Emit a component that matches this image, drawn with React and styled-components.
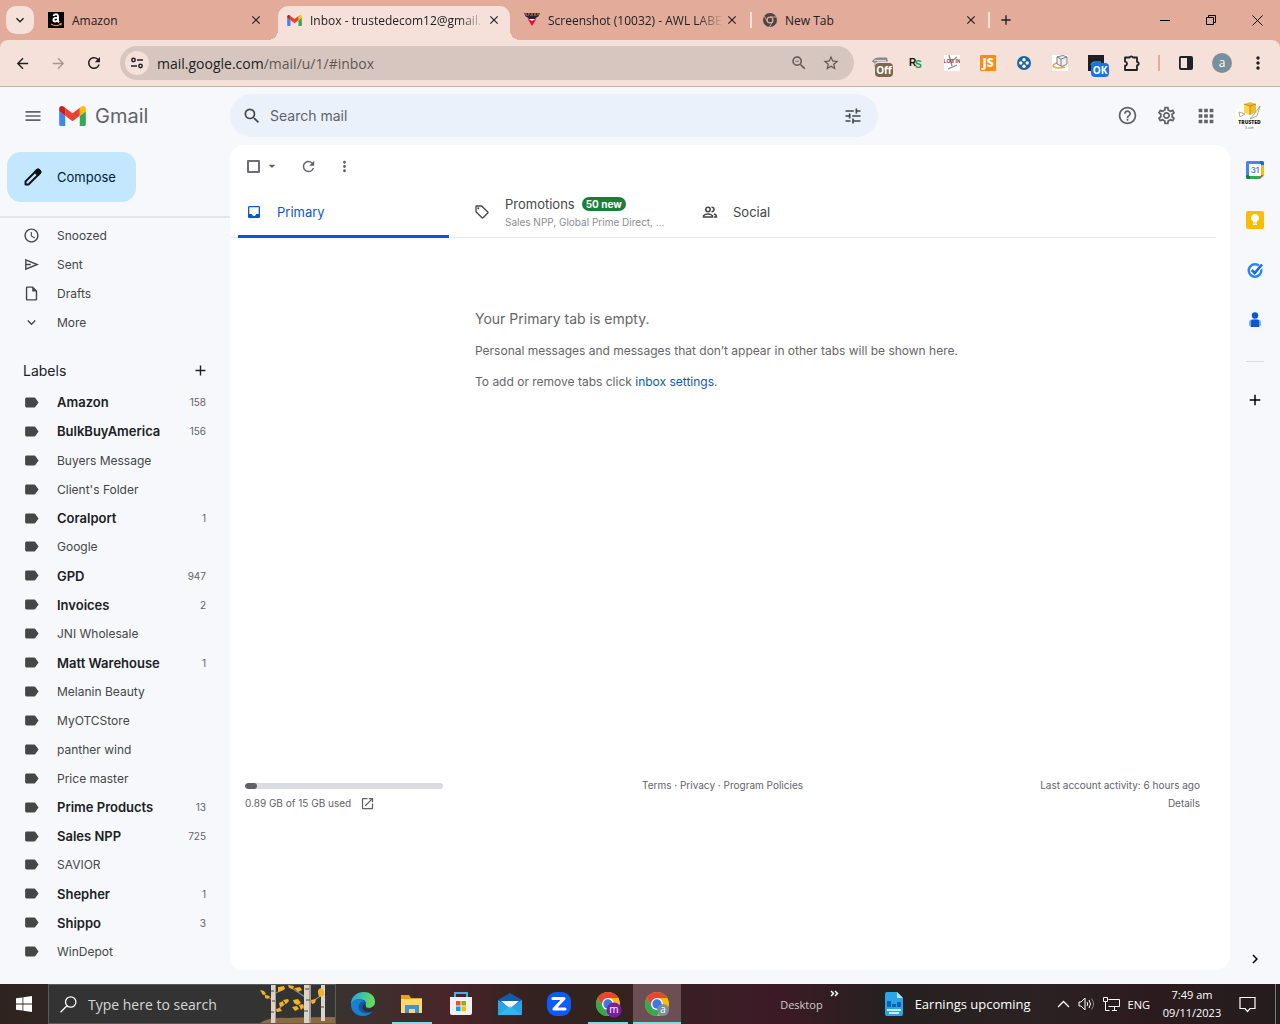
import React from "react";
import styled, { createGlobalStyle } from "styled-components";
import {
  MdAccessTime,
  MdAdd,
  MdApps,
  MdArrowBack,
  MdArrowDropDown,
  MdArrowForward,
  MdChevronRight,
  MdClose,
  MdExpandMore,
  MdHelpOutline,
  MdInbox,
  MdLabel,
  MdMenu,
  MdMoreVert,
  MdOpenInNew,
  MdOutlineInsertDriveFile,
  MdOutlineSell,
  MdOutlineSettings,
  MdRefresh,
  MdSearch,
  MdStarOutline,
  MdTune,
  MdZoomOut,
} from "react-icons/md";

const GlobalStyle = createGlobalStyle`
  * { box-sizing: border-box; }
  body { margin: 0; font-family: Inter, "Liberation Sans", sans-serif; }
  button { border: 0; padding: 0; background: none; color: inherit; font: inherit; cursor: pointer; }
  a { color: inherit; text-decoration: none; }
  svg { display: block; flex: none; }
  ul { list-style: none; margin: 0; padding: 0; }
`;

const Screen = styled.div`
  display: flex;
  flex-direction: column;
  min-height: 100vh;
  background: #f6f8fc;
`;

/* browser */

const TabStrip = styled.div`
  display: flex;
  height: 40px;
  padding-left: 6px;
  background: #e3ab9a;
  font-family: "Open Sans", "Noto Sans", sans-serif;
  font-size: 12px;
  color: #202124;
`;

const TabSearch = styled.button`
  display: grid;
  place-items: center;
  width: 28px;
  height: 28px;
  margin: 6px 4px 0 0;
  border-radius: 10px;
  background: #f5e0da;
`;

const Tab = styled.div`
  position: relative;
  display: flex;
  align-items: center;
  gap: 2px;
  width: ${(p) => p.$width}px;
  margin-top: ${(p) => (p.$active ? 6 : 0)}px;
  padding: ${(p) => (p.$active ? "0 9px 6px 9px" : "0 10px")};
  border-radius: 10px 10px 0 0;
  background: ${(p) => (p.$active ? "#f5e0da" : "transparent")};
  &::before,
  &::after {
    content: "";
    display: ${(p) => (p.$active ? "block" : "none")};
    position: absolute;
    bottom: 0;
    width: 10px;
    height: 10px;
  }
  &::before {
    left: -10px;
    background: radial-gradient(circle at 0 0, transparent 10px, #f5e0da 10px);
  }
  &::after {
    right: -10px;
    background: radial-gradient(circle at 100% 0, transparent 10px, #f5e0da 10px);
  }
`;

const TabTitle = styled.span`
  flex: 1;
  margin-left: 6px;
  overflow: hidden;
  white-space: nowrap;
  mask-image: ${(p) => (p.$fade ? "linear-gradient(90deg, #000 85%, transparent)" : "none")};
`;

const TabRule = styled.span`
  width: 2px;
  height: 16px;
  margin-top: 12px;
  background: #f5e0da;
`;

const NewTab = styled.button`
  display: grid;
  place-items: center;
  width: 32px;
`;

const WindowButtons = styled.div`
  display: flex;
  margin-left: auto;
`;

const WindowButton = styled.button`
  display: grid;
  place-items: center;
  width: 46px;
`;

const ToolbarWrap = styled.div`
  background: #e3ab9a;
`;

const Toolbar = styled.div`
  display: flex;
  align-items: center;
  height: 47px;
  padding: 0 4px;
  border-bottom: 1px solid #c4b1ab;
  border-radius: 8px 8px 0 0;
  background: #f5e0da;
`;

const ToolButton = styled.button`
  display: grid;
  place-items: center;
  width: 36px;
  height: 34px;
  color: ${(p) => (p.$dim ? "#a89692" : "#202124")};
`;

const Address = styled.div`
  display: flex;
  align-items: center;
  flex: 1;
  height: 34px;
  margin: 0 8px;
  padding: 0 14px 0 5px;
  gap: 8px;
  border-radius: 17px;
  background: #d7c6bf;
  color: #5f5653;
`;

const SiteInfo = styled.button`
  display: grid;
  place-items: center;
  width: 24px;
  height: 24px;
  border-radius: 12px;
  background: #f5e0da;
`;

const AddressText = styled.span`
  flex: 1;
  font: 14px "Open Sans", "Noto Sans", sans-serif;
  b {
    font-weight: 400;
    color: #202124;
  }
`;

const AddressIcons = styled.span`
  display: flex;
  gap: 14px;
`;

const Extension = styled.button`
  position: relative;
  display: grid;
  place-items: center;
  width: 36px;
  height: 34px;
`;

const ExtensionBadge = styled.span`
  position: absolute;
  left: 13px;
  top: 17px;
  width: 18px;
  height: 14px;
  border-radius: 4px;
  background: ${(p) => p.$color};
  color: #fff;
  font: 700 10px/14px "Open Sans", sans-serif;
  text-align: center;
`;

const ToolbarRule = styled.span`
  width: 2px;
  height: 16px;
  margin: 0 8px;
  background: #e3ab9a;
`;

const ProfileDot = styled.span`
  display: grid;
  place-items: center;
  width: 20px;
  height: 20px;
  border-radius: 10px;
  background: #78909c;
  color: #fff;
  font: 12px/18px "Open Sans", sans-serif;
`;

/* mail header */

const Header = styled.header`
  display: flex;
  align-items: center;
  height: 58px;
  padding: 0 16px 1px 0;
`;

const Brand = styled.div`
  display: flex;
  align-items: center;
  width: 230px;
  padding-left: 23px;
  color: #5f6368;
`;

const BrandLink = styled.a`
  display: flex;
  align-items: center;
  gap: 9px;
  margin-left: 16px;
  font-size: 20px;
`;

const SearchBar = styled.form`
  display: flex;
  align-items: center;
  flex: 0 1 648px;
  height: 43px;
  gap: 8px;
  padding: 0 15px 0 12px;
  border-radius: 22px;
  background: #eaf1fb;
  color: #444746;
`;

const SearchInput = styled.input`
  flex: 1;
  min-width: 0;
  padding: 0;
  border: 0;
  outline: 0;
  background: none;
  font: 14px Inter, sans-serif;
  &::placeholder {
    color: #5f6368;
    opacity: 1;
  }
`;

const HeaderActions = styled.div`
  display: flex;
  align-items: center;
  gap: 18px;
  margin-left: auto;
  color: #5f6368;
`;

/* mail body */

const Body = styled.div`
  display: flex;
  flex: 1;
`;

const Sidebar = styled.nav`
  display: flex;
  flex-direction: column;
  width: 230px;
  padding: 7px 0 18px;
  color: #444746;
`;

const Compose = styled.button`
  display: flex;
  align-items: center;
  align-self: flex-start;
  gap: 14px;
  height: 50px;
  margin: 0 0 14px 7px;
  padding: 0 20px 0 16px;
  border-radius: 14px;
  background: #c2e7ff;
  color: #001d35;
  font-size: 13px;
`;

const FolderList = styled.ul`
  padding-top: 3px;
  border-top: 2px solid #e3e5ea;
`;

const LabelList = styled.ul`
  display: flex;
  flex: 1;
  flex-direction: column;
  li {
    display: flex;
    flex: 1;
  }
`;

const SideLink = styled.a`
  display: flex;
  align-items: center;
  width: 100%;
  min-height: ${(p) => (p.$label ? 24 : 29)}px;
  padding: 0 24px 0 23px;
  gap: 17px;
  font-size: ${(p) => (p.$bold ? 13 : 12)}px;
  font-weight: ${(p) => (p.$bold ? 600 : 400)};
  color: ${(p) => (p.$bold ? "#202124" : "#444746")};
  svg {
    color: #444746;
  }
`;

const Count = styled.span`
  margin-left: auto;
  font-size: 10px;
  font-weight: 400;
  color: #5f6368;
`;

const LabelsHeader = styled.div`
  display: flex;
  align-items: center;
  justify-content: space-between;
  height: 36px;
  margin-top: 15px;
  padding: 0 21px 0 23px;
  font-size: 14px;
  color: #202124;
`;

const Main = styled.main`
  display: flex;
  flex: 1;
  flex-direction: column;
  min-width: 0;
  margin-bottom: 14px;
  border-radius: 14px;
  background: #fff;
`;

const MailTools = styled.div`
  display: flex;
  align-items: center;
  height: 42px;
  padding-left: 17px;
  color: #5f6368;
`;

const SelectAll = styled.input`
  appearance: none;
  width: 13px;
  height: 13px;
  margin: 0 4px 0 0;
  border: 2px solid #6b6e72;
  border-radius: 1px;
`;

const Gap = styled.span`
  width: ${(p) => p.$width}px;
`;

const Tabs = styled.div`
  display: flex;
  gap: 17px;
  height: 51px;
  margin-right: 14px;
  padding-left: 8px;
  border-bottom: 1px solid #e8eaed;
`;

const MailTab = styled.button`
  display: flex;
  align-items: center;
  gap: 15px;
  width: 211px;
  margin-bottom: -1px;
  padding: 2px 8px 0;
  border-bottom: 3px solid ${(p) => (p.$active ? "#0b57d0" : "transparent")};
  border-radius: 3px 3px 0 0;
  color: ${(p) => (p.$active ? "#0b57d0" : "#444746")};
  font-size: 13px;
  text-align: left;
  white-space: nowrap;
`;

const TabText = styled.span`
  display: flex;
  flex-direction: column;
  gap: 4px;
`;

const TabLine = styled.span`
  display: flex;
  align-items: center;
  gap: 7px;
`;

const NewBadge = styled.span`
  padding: 0 4px;
  border-radius: 7px;
  background: #188038;
  color: #fff;
  font-size: 10px;
  font-weight: 700;
  line-height: 14px;
`;

const TabSenders = styled.span`
  font-size: 10px;
  color: #8a8d91;
`;

const Empty = styled.section`
  flex: 1;
  padding: 70px 0 0 245px;
  color: #666;
  font-size: 12px;
  line-height: 20px;
  h1 {
    margin: 0 0 11px;
    font-size: 14px;
    font-weight: 400;
    line-height: 22px;
  }
  p {
    margin: 0 0 11px;
  }
  a {
    color: #0b57d0;
  }
`;

const Footer = styled.footer`
  display: grid;
  grid-template-columns: 1fr 1fr 1fr;
  padding: 0 30px 158px 15px;
  color: #5f6368;
  font-size: 10px;
  line-height: 18px;
`;

const Storage = styled.div`
  width: 198px;
`;

const StorageBar = styled.div`
  height: 6px;
  margin: 7px 0 5px;
  border-radius: 3px;
  background: #dadce0;
  overflow: hidden;
`;

const StorageUsed = styled.div`
  height: 6px;
  border-radius: 3px;
  background: #5f6368;
`;

const StorageText = styled.a`
  display: flex;
  align-items: center;
  gap: 9px;
`;

const FooterLinks = styled.div`
  text-align: center;
`;

const Activity = styled.div`
  text-align: right;
`;

const Rail = styled.aside`
  display: flex;
  flex-direction: column;
  align-items: center;
  gap: 32px;
  width: 50px;
  padding: 16px 0;
`;

const RailRule = styled.hr`
  width: 18px;
  margin: 0 0 -3px;
  border: 0;
  border-top: 1px solid #dadce0;
`;

const RailBottom = styled.button`
  margin-top: auto;
`;

/* windows taskbar */

const Taskbar = styled.div`
  display: flex;
  align-items: stretch;
  height: 40px;
  background: linear-gradient(90deg, #2f231f 0, #3a322e 28%, #4a242a 35%, #33221f 42%, #33231f 47%, #3c1c27 58%, #3c1a25 61%, #272020 69%, #2a2222 80%, #2c1b1e 90%, #241d1d 100%);
  color: #fff;
  font: 11px "Open Sans", "Noto Sans", sans-serif;
`;

const StartButton = styled.button`
  display: grid;
  place-items: center;
  width: 48px;
`;

const TaskSearch = styled.label`
  display: flex;
  align-items: center;
  width: 288px;
  padding-left: 11px;
  gap: 11px;
  border: 1px solid #5a5a5a;
  background: #333;
`;

const TaskSearchInput = styled.input`
  flex: 1;
  min-width: 0;
  padding: 0;
  border: 0;
  outline: 0;
  background: none;
  font: 14px "Open Sans", "Noto Sans", sans-serif;
  &::placeholder {
    color: #d6d6d6;
    opacity: 1;
  }
`;

const TaskApps = styled.div`
  display: flex;
  gap: 1px;
  padding-left: 3px;
`;

const TaskApp = styled.button`
  display: grid;
  place-items: center;
  width: 48px;
  background: ${(p) =>
    p.$active
      ? "linear-gradient(#76dfe6, #76dfe6) bottom / 48px 2px no-repeat, #6b4f55"
      : p.$running
      ? "linear-gradient(#76dfe6, #76dfe6) bottom / 40px 2px no-repeat"
      : "none"};
`;

const Tray = styled.div`
  display: flex;
  align-items: center;
  margin-left: auto;
`;

const DesktopLabel = styled.span`
  color: #ccc;
`;

const Overflow = styled.button`
  align-self: flex-start;
  margin: 0 46px 0 7px;
  padding-top: 6px;
`;

const News = styled.button`
  display: flex;
  align-items: center;
  gap: 12px;
  margin-right: 26px;
  font-size: 13px;
`;

const TrayIcons = styled.div`
  display: flex;
  align-items: center;
  gap: 8px;
`;

const Clock = styled.div`
  width: 60px;
  margin: 0 17px 0 12px;
  text-align: center;
  line-height: 18px;
  white-space: nowrap;
`;

const ShowDesktop = styled.button`
  width: 5px;
  height: 40px;
  margin-left: 19px;
  border-left: 1px solid #777;
`;

/* drawings */

const GmailMark = ({ width = 27, height = 20 }) => (
  <svg width={width} height={height} viewBox="0 0 88 66">
    <path fill="#4285f4" d="M6 66h14V32L0 17v43c0 3.300 2.700 6 6 6" />
    <path fill="#34a853" d="M68 66h14c3.300 0 6-2.700 6-6V17L68 32" />
    <path fill="#fbbc04" d="M68 6v26l20-15V9c0-7.400-8.500-11.600-14.400-7.200" />
    <path fill="#ea4335" d="M20 32V6l24 18L68 6v26L44 50" />
    <path fill="#c5221f" d="M0 9v8l20 15V6l-5.600-4.200C8.500-2.600 0 1.600 0 9" />
  </svg>
);

const AmazonMark = () => (
  <svg width="16" height="16" viewBox="0 0 16 16">
    <rect width="16" height="16" fill="#000" />
    <path d="M5.500 4C6 1.800 10 1.700 10 4v5l1 1.300M10 5.600C7 5.500 5.400 6.300 5.400 8s3.600 2.300 4.600-.4" fill="none" stroke="#fff" strokeWidth="1.900" />
    <path d="M3 12q5 3.200 10 0M11.500 11.700l1.700-.1-.4 1.700" fill="none" stroke="#f90" strokeWidth="1.100" />
  </svg>
);

const AwlMark = () => (
  <svg width="16" height="16" viewBox="0 0 16 16">
    <path d="M0 1h16l-2 4H2z" fill="#30202c" />
    <path d="M1 2h14" stroke="#d49a3c" strokeDasharray="2 1" />
    <path d="M2 3.500h12" stroke="#c02090" strokeDasharray="3 1" />
    <path d="M3 5h10l-2 2H5z" fill="#1c2060" />
    <path d="M5 7h6l-3 2z" fill="#fff" />
    <path d="M3.500 6.500 8 9l4.500-2.500L8 14z" fill="#f00c1c" />
  </svg>
);

const GreyChrome = () => (
  <svg width="14" height="14" viewBox="0 0 24 24">
    <circle cx="12" cy="12" r="12" fill="#4a4546" />
    <circle cx="12" cy="12" r="5" fill="#4a4546" stroke="#e3ab9a" strokeWidth="2.200" />
    <path d="M12 6.800h11M7.600 14.600 2.200 5.400M16.400 14.600 11 24" stroke="#e3ab9a" strokeWidth="1.500" />
  </svg>
);

const ChromeMark = ({ badge, letter }) => (
  <svg width="28" height="28" viewBox="0 0 28 28">
    <circle cx="14" cy="14" r="12" fill="#fbbc04" />
    <path d="M14 8h10.400a12 12 0 0 0-20.800 0l5.300 9z" fill="#ea4335" />
    <path d="M19 17l-5 9A12 12 0 0 1 3.600 8l5.200 9z" fill="#34a853" />
    <circle cx="14" cy="14" r="6" fill="#fff" />
    <circle cx="14" cy="14" r="4.700" fill="#3b78e7" />
    <circle cx="20" cy="20" r={letter === "m" ? 7.500 : 6} fill={badge} />
    <text x="20" y="23" fontSize="10" textAnchor="middle" fill="#fff">{letter}</text>
  </svg>
);

const SiteInfoIcon = () => (
  <svg width="14" height="14" viewBox="0 0 14 14" fill="none" stroke="#202124" strokeWidth="1.500">
    <circle cx="3.500" cy="4" r="1.700" />
    <path d="M7 4h6M1 10h6" />
    <circle cx="10.500" cy="10" r="1.700" />
  </svg>
);

const PuzzleIcon = () => (
  <svg width="18" height="18" viewBox="0 0 18 18" fill="none" stroke="#202124" strokeWidth="1.800" strokeLinejoin="round">
    <path d="M2 3.500h4.500a1.800 1.800 0 0 1 3.400 0H14v4.400a1.700 1.700 0 0 1 0 3.400V16H2v-4.300a2 2 0 0 0 0-4z" />
  </svg>
);

const SidePanelIcon = () => (
  <svg width="16" height="16" viewBox="0 0 16 16">
    <rect x="1.900" y="2" width="12.200" height="12" rx="1" fill="none" stroke="#202124" strokeWidth="1.800" />
    <path d="M9 2h5v12H9z" fill="#202124" />
  </svg>
);

const CouponIcon = () => (
  <svg width="20" height="18" viewBox="0 0 20 18">
    <path d="M2 8q1-4 6-4.500h9l1 4H8L5 9z" fill="#85898a" />
    <path d="M4 6.500h12" stroke="#d8dad9" strokeWidth="1.200" />
    <path d="M5 9v4" stroke="#c3c5c4" strokeWidth="2" />
  </svg>
);

const RsIcon = () => (
  <svg width="16" height="16" viewBox="0 0 16 16" fontFamily="Liberation Sans" fontWeight="700">
    <text x="1" y="11" fontSize="10" fill="#111">R</text>
    <text x="7" y="13" fontSize="10" fill="#18a04c">S</text>
  </svg>
);

const LoginIcon = () => (
  <svg width="16" height="16" viewBox="0 0 16 16">
    <rect width="16" height="16" fill="#fff" />
    <path d="m5 0 3 11M4 14l9-4M8 6l5-4" stroke="#888" fill="none" strokeWidth="1.300" />
    <text x="8" y="8" fontSize="5" textAnchor="middle" fontWeight="700" fontFamily="Liberation Sans" fill="#9b2f33">LOG IN</text>
  </svg>
);

const JsIcon = () => (
  <svg width="16" height="16" viewBox="0 0 16 16">
    <rect width="16" height="16" rx="1" fill="#ff8a0d" />
    <text x="8" y="12" fontSize="12" textAnchor="middle" fontWeight="800" fontFamily="Open Sans" fill="#fff">JS</text>
  </svg>
);

const CrossIcon = () => (
  <svg width="14" height="14" viewBox="0 0 14 14">
    <circle cx="7" cy="7" r="7" fill="#1f6698" />
    <g fill="#fff">
      <circle cx="7" cy="3.800" r="1.700" />
      <circle cx="7" cy="10.200" r="1.700" />
      <circle cx="3.800" cy="7" r="1.700" />
      <circle cx="10.200" cy="7" r="1.700" />
    </g>
  </svg>
);

const BoxIcon = () => (
  <svg width="16" height="16" viewBox="0 0 16 16">
    <rect width="16" height="16" fill="#fff" />
    <path d="M5 8c-8 2-3 7 8 4" fill="none" stroke="#f0a44c" strokeWidth="1.500" />
    <path d="m5 2 6-1.500L15 2v7l-5 2.500L5 9z" fill="#eee" stroke="#666" strokeWidth=".8" />
    <path d="m5 2 4 2v7M9 4l6-2" fill="none" stroke="#666" strokeWidth=".8" />
  </svg>
);

const DarkIcon = () => (
  <svg width="16" height="16" viewBox="0 0 16 16">
    <rect width="16" height="16" fill="#221d22" />
    <path d="M3 10q1-3 5-3h5" fill="none" stroke="#2398d0" strokeWidth="1.300" />
  </svg>
);

const Avatar = () => (
  <svg width="29" height="29" viewBox="0 0 29 29">
    <circle cx="14.500" cy="14.500" r="14.500" fill="#fff" />
    <path d="m4 11 6 2-5 3zM20 12l5-7-3 10-7 3z" fill="#fff" stroke="#9b9a76" strokeWidth=".8" />
    <path d="m9 3 6-2 6 2v8l-6 3-6-3z" fill="#f1bd2b" />
    <path d="m9 3 6 2v9l-6-3z" fill="#ffd84e" />
    <path d="m9 3 6 2 6-2M15 5v9" fill="none" stroke="#9c771c" strokeWidth=".7" />
    <text x="14.500" y="23" fontSize="5" textAnchor="middle" fontWeight="800" fontFamily="Open Sans" fill="#111">TRUSTED</text>
    <text x="14.500" y="28" fontSize="3" textAnchor="middle" fontFamily="Open Sans" fill="#444">E-com</text>
  </svg>
);

const PencilIcon = () => (
  <svg width="20" height="20" viewBox="0 0 20 20" fill="none" stroke="#111" strokeWidth="1.900" strokeLinejoin="round">
    <path d="M2.500 17.500v-3L14 3q1-1 2 0l1 1q1 1 0 2L5.500 17.500z" />
    <path d="m12 5 3 3 2.300-2.300q.6-.8-.3-1.700l-1-1q-.9-.9-1.700-.3z" fill="#111" />
  </svg>
);

const SendIcon = ({ size }) => (
  <svg width={size} height={size} viewBox="0 0 24 24" fill="none" stroke="currentColor" strokeWidth="2">
    <path d="M4 5.500 20 12 4 18.500zM4 12h7" />
  </svg>
);

const PeopleIcon = () => (
  <svg width="16" height="16" viewBox="0 0 16 16" fill="none" stroke="currentColor" strokeWidth="1.500">
    <circle cx="6" cy="5.500" r="2.200" />
    <path d="M1.500 13v-1.300Q3 10 6 10t4.500 1.700V13zM9.500 3.300q2.500 0 2.500 2.200t-2.500 2.200M12 10q2.500.7 2.500 3H12" />
  </svg>
);

const CalendarIcon = () => (
  <svg width="18" height="18" viewBox="0 0 18 18">
    <path d="M1.500 0H14v4H4v10H0V1.500Q0 0 1.500 0" fill="#4285f4" />
    <path d="M14 0h2.500Q18 0 18 1.500V4h-4z" fill="#1967d2" />
    <path d="M14 4h4v10h-4z" fill="#fbbc04" />
    <path d="M4 14h10v4H4z" fill="#34a853" />
    <path d="M0 14h4v4H1.500Q0 18 0 16.500" fill="#188038" />
    <path d="M14 14h4l-4 4z" fill="#ea4335" />
    <path d="M3 3h12v12H3z" fill="#fff" />
    <text x="9" y="12" fontSize="8" textAnchor="middle" fontWeight="600" fill="#4285f4">31</text>
  </svg>
);

const KeepIcon = () => (
  <svg width="18" height="18" viewBox="0 0 18 18">
    <rect width="18" height="18" rx="2" fill="#fbbc04" />
    <path d="M7 11.500v-1a4 4 0 1 1 4 0v1zM7 12.500h4V14H7z" fill="#fff" />
  </svg>
);

const TasksIcon = () => (
  <svg width="18" height="18" viewBox="0 0 18 18" fill="none">
    <circle cx="9" cy="9.500" r="6.300" stroke="#2684fc" strokeWidth="2.400" />
    <path d="m5.700 9 3 3L16 4.500" stroke="#f6f8fc" strokeWidth="4" />
    <path d="m5.700 9 3 3L16 3.500" stroke="#1a6fe8" strokeWidth="2.600" />
  </svg>
);

const ContactsIcon = () => (
  <svg width="18" height="18" viewBox="0 0 18 18">
    <circle cx="9" cy="4.500" r="3.200" fill="#0b57d0" />
    <rect x="3" y="8.500" width="12" height="7.500" rx="3" fill="#7baaf7" />
    <path d="M5 16v-5.500q0-2 2-2h4q2 0 2 2V16z" fill="#0b57d0" />
  </svg>
);

const WindowsIcon = () => (
  <svg width="16" height="16" viewBox="0 0 16 16" fill="#fff">
    <path d="M0 2.300 6.500 1.400v6.200H0zM7.300 1.300 16 0v7.600H7.300zM0 8.400h6.500v6.200L0 13.700zM7.300 8.400H16V16l-8.700-1.300z" />
  </svg>
);

const TaskSearchIcon = () => (
  <svg width="17" height="17" viewBox="0 0 17 17" fill="none" stroke="#fff" strokeWidth="1.300">
    <circle cx="10.700" cy="6" r="5.200" />
    <path d="M7 9.700.5 16.200" />
  </svg>
);

const Birches = () => (
  <svg width="75" height="38" viewBox="0 0 75 38">
    <path d="M0 38q8-6 28-5 18-1 47-1v6z" fill="#8b6b45" />
    <path d="M11 14 2 8M16 8l8-4M16 26l11-9M45 12 30 2M45 24l-10-7M50 18l12-8" stroke="#8d837b" strokeWidth="1.200" />
    <path d="M11 0h5v38h-5zM44 0h7v38h-7zM61 0h4v36h-4z" fill="#dcd3c8" />
    <path d="M15 0h1v38h-1zM49 0h2v38h-2z" fill="#a59a90" />
    <path d="M11 6h3M12 16h3M11 27h3M45 4h4M46 15h4M44 26h4M61 9h3M61 22h3" stroke="#4c4039" />
    <g fill="#f4b21c">
      <path d="m0 5 4 1 2 3-3 1zM5 10l5 1-2 3-3-1zM18 2l6-1 1 3-4 2-3 1zM19 18l4-2 1 4-4 2zM23 15l5-1 1 2-3 3zM16 24l4-1 2 3-5 1z" />
      <path d="m28 0 6 1-1 3-4-1zM34 3l6-1 2 3-4 2zM33 15l5-1 3 4-4 2-3-2zM32 22l5-1 2 3-4 2zM39 20l4-1 1 3-3 3zM51 15l5-1-1 4-3 1z" />
      <path d="M59 12q-3-8 2-9 5 3 2 8z" />
    </g>
  </svg>
);

const EdgeIcon = () => (
  <svg width="24" height="24" viewBox="0 0 24 24">
    <defs>
      <linearGradient id="edgeTop" x1="0" x2="1" y1=".3" y2=".5">
        <stop offset="0" stopColor="#26a8e0" />
        <stop offset="1" stopColor="#6be04f" />
      </linearGradient>
    </defs>
    <circle cx="12" cy="12" r="12" fill="#0c59a4" />
    <path d="M0 12C0-3 24-4 24 10c0 5-6 7-9 5-2-1 0-2 0-4 0-4-11-6-15 1" fill="url(#edgeTop)" />
    <path d="M0 12c2-6 10-6 13-2-5-1-7 5-4 9 3 3 9 3 12 1-6 7-21 5-21-8" fill="#1b7fd0" />
    <path d="M14.500 15.500c3 2 8 .5 9-3v6l-3 1q-7 2-9-3 0-3 2-5 2 2 1 4" fill="#3b2a28" />
  </svg>
);

const FolderIcon = () => (
  <svg width="24" height="22" viewBox="0 0 24 22">
    <path d="M1 2h8l2 3h11v14H1z" fill="#e5a323" />
    <path d="M1 6h21v14H1z" fill="#ffd86b" />
    <path d="M5 12h14v8h-4v-4H9v4H5z" fill="#3d93d8" />
  </svg>
);

const StoreIcon = () => (
  <svg width="24" height="26" viewBox="0 0 24 26">
    <path d="M6 8V2h12v6" fill="none" stroke="#3bb4ec" strokeWidth="2" />
    <path d="M1 6h22v16q0 2-2 2H3q-2 0-2-2z" fill="#f1f1f1" />
    <path d="M7 10h4.500v4.500H7z" fill="#f25022" />
    <path d="M12.500 10H17v4.500h-4.500z" fill="#7fba00" />
    <path d="M7 15.500h4.500V20H7z" fill="#00a4ef" />
    <path d="M12.500 15.500H17V20h-4.500z" fill="#ffb900" />
  </svg>
);

const MailIcon = () => (
  <svg width="24" height="24" viewBox="0 0 24 24">
    <path d="M0 8 12 1l12 7v8H0z" fill="#0f5fa8" />
    <path d="M3 9h18l-9 8z" fill="#f4f4f4" />
    <path d="m0 8 12 8 12-8v15H0z" fill="#2aa3e8" />
    <path d="m0 23 12-9 12 9z" fill="#40c0f4" opacity=".6" />
  </svg>
);

const ZoomAppIcon = () => (
  <svg width="24" height="24" viewBox="0 0 24 24">
    <rect width="24" height="24" rx="9" fill="#0b5cff" />
    <path d="M6 6.500h11L7 17h11" fill="none" stroke="#fff" strokeWidth="3.200" strokeLinejoin="round" strokeLinecap="round" />
  </svg>
);

const NewsIcon = () => (
  <svg width="18" height="24" viewBox="0 0 18 24">
    <path d="M2 0h10l6 6v16q0 2-2 2H2q-2 0-2-2V2q0-2 2-2" fill="#2ca4ea" />
    <path d="M12 0v6h6z" fill="#b5e3fb" />
    <path d="M2 9h4v6H2zM7 12h4v3H7zM12 10h4v5h-4z" fill="#0b63b0" />
    <path d="M2 18h14M4 21h10" stroke="#fff" strokeWidth="1.500" />
  </svg>
);

const TrayChevron = () => (
  <svg width="13" height="8" viewBox="0 0 13 8" fill="none" stroke="#fff" strokeWidth="1.300">
    <path d="M1 7l5.500-5.500L12 7" />
  </svg>
);

const SpeakerIcon = () => (
  <svg width="17" height="14" viewBox="0 0 17 14" fill="none" stroke="#fff">
    <path d="M1 5h2l4-4v12L3 9H1z" />
    <path d="M9 5q1.500 2 0 4M11 3q3 4 0 8" />
    <path d="M13.500 1.500q4 5.500 0 11" stroke="#888" />
  </svg>
);

const NetworkIcon = () => (
  <svg width="17" height="14" viewBox="0 0 17 14" fill="none" stroke="#fff">
    <path d="M5.500 2.500h11v7h-11M9 13.500h5M11.500 9.500v4M.5.500h4v4h-4zM2.500 4.500v9h4" />
  </svg>
);

const NotificationIcon = () => (
  <svg width="17" height="17" viewBox="0 0 17 17" fill="none" stroke="#fff" strokeWidth="1.200">
    <path d="M1 1.500h15v11h-5L8.500 15.500 6 12.500H1z" />
  </svg>
);

const folders = [
  ["Snoozed", MdAccessTime],
  ["Sent", SendIcon],
  ["Drafts", MdOutlineInsertDriveFile],
  ["More", MdExpandMore],
];

const labels = [
  ["Amazon", 158],
  ["BulkBuyAmerica", 156],
  ["Buyers Message"],
  ["Client's Folder"],
  ["Coralport", 1],
  ["Google"],
  ["GPD", 947],
  ["Invoices", 2],
  ["JNI Wholesale"],
  ["Matt Warehouse", 1],
  ["Melanin Beauty"],
  ["MyOTCStore"],
  ["panther wind"],
  ["Price master"],
  ["Prime Products", 13],
  ["Sales NPP", 725],
  ["SAVIOR"],
  ["Shepher", 1],
  ["Shippo", 3],
  ["WinDepot"],
];

const extensions = [
  { name: "Coupons", Icon: CouponIcon, badge: "Off", color: "#80664a" },
  { name: "RS", Icon: RsIcon },
  { name: "Log in", Icon: LoginIcon },
  { name: "JS", Icon: JsIcon },
  { name: "Cross", Icon: CrossIcon },
  { name: "Box", Icon: BoxIcon },
  { name: "Status", Icon: DarkIcon, badge: "OK", color: "#1a73e8" },
  { name: "Extensions", Icon: PuzzleIcon },
];

function BrowserChrome() {
  return (
    <>
      <TabStrip>
        <TabSearch aria-label="Search tabs"><MdExpandMore size={16} /></TabSearch>
        <Tab $width={235}>
          <AmazonMark />
          <TabTitle>Amazon</TabTitle>
          <button aria-label="Close tab"><MdClose size={14} /></button>
        </Tab>
        <Gap $width={5} />
        <Tab $width={232} $active>
          <GmailMark width={15} height={11} />
          <TabTitle $fade>Inbox - trustedecom12@gmail.</TabTitle>
          <button aria-label="Close tab"><MdClose size={14} /></button>
        </Tab>
        <Gap $width={4} />
        <Tab $width={235}>
          <AwlMark />
          <TabTitle $fade>Screenshot (10032) - AWL LABE</TabTitle>
          <button aria-label="Close tab"><MdClose size={14} /></button>
        </Tab>
        <Gap $width={1} />
        <TabRule />
        <Gap $width={1} />
        <Tab $width={235}>
          <GreyChrome />
          <TabTitle>New Tab</TabTitle>
          <button aria-label="Close tab"><MdClose size={14} /></button>
        </Tab>
        <TabRule />
        <NewTab aria-label="New tab"><MdAdd size={16} /></NewTab>
        <WindowButtons>
          <WindowButton aria-label="Minimize">
            <svg width="10" height="10" stroke="#000"><path d="M0 5.500h10" /></svg>
          </WindowButton>
          <WindowButton aria-label="Restore">
            <svg width="11" height="11" fill="none" stroke="#000"><path d="M.5 2.500h7v7h-7zM2.500 2.500v-2h7v7h-2" /></svg>
          </WindowButton>
          <WindowButton aria-label="Close">
            <svg width="11" height="11" stroke="#000"><path d="m.5.500 10 10m0-10-10 10" /></svg>
          </WindowButton>
        </WindowButtons>
      </TabStrip>
      <ToolbarWrap>
        <Toolbar>
          <ToolButton aria-label="Back"><MdArrowBack size={17} /></ToolButton>
          <ToolButton aria-label="Forward" $dim><MdArrowForward size={17} /></ToolButton>
          <ToolButton aria-label="Reload"><MdRefresh size={18} /></ToolButton>
          <Address>
            <SiteInfo aria-label="Site information"><SiteInfoIcon /></SiteInfo>
            <AddressText><b>mail.google.com</b>/mail/u/1/#inbox</AddressText>
            <AddressIcons>
              <MdZoomOut size={18} />
              <MdStarOutline size={18} />
            </AddressIcons>
          </Address>
          {extensions.map(({ name, Icon, badge, color }) => (
            <Extension key={name} aria-label={name}>
              <Icon />
              {badge && <ExtensionBadge $color={color}>{badge}</ExtensionBadge>}
            </Extension>
          ))}
          <ToolbarRule />
          <ToolButton aria-label="Side panel"><SidePanelIcon /></ToolButton>
          <ToolButton aria-label="Profile"><ProfileDot>a</ProfileDot></ToolButton>
          <ToolButton aria-label="Menu"><MdMoreVert size={20} /></ToolButton>
        </Toolbar>
      </ToolbarWrap>
    </>
  );
}

function MailHeader() {
  return (
    <Header>
      <Brand>
        <button aria-label="Main menu"><MdMenu size={20} /></button>
        <BrandLink href="#inbox"><GmailMark />Gmail</BrandLink>
      </Brand>
      <SearchBar role="search">
        <MdSearch size={20} />
        <SearchInput aria-label="Search mail" placeholder="Search mail" />
        <button type="button" aria-label="Search options"><MdTune size={20} /></button>
      </SearchBar>
      <HeaderActions>
        <button aria-label="Support"><MdHelpOutline size={21} /></button>
        <button aria-label="Settings"><MdOutlineSettings size={21} /></button>
        <button aria-label="Google apps"><MdApps size={22} /></button>
        <button aria-label="Account"><Avatar /></button>
      </HeaderActions>
    </Header>
  );
}

function MailSidebar() {
  return (
    <Sidebar>
      <Compose><PencilIcon />Compose</Compose>
      <FolderList>
        {folders.map(([name, Icon]) => (
          <li key={name}>
            <SideLink href="#"><Icon size={17} />{name}</SideLink>
          </li>
        ))}
      </FolderList>
      <LabelsHeader>
        Labels
        <button aria-label="Create new label"><MdAdd size={17} /></button>
      </LabelsHeader>
      <LabelList>
        {labels.map(([name, count]) => (
          <li key={name}>
            <SideLink href="#" $label $bold={count > 0}>
              <MdLabel size={17} />
              {name}
              {count && <Count>{count}</Count>}
            </SideLink>
          </li>
        ))}
      </LabelList>
    </Sidebar>
  );
}

function MailMain() {
  return (
    <Main>
      <MailTools>
        <SelectAll type="checkbox" aria-label="Select all" />
        <button aria-label="Select options"><MdArrowDropDown size={16} /></button>
        <Gap $width={20} />
        <button aria-label="Refresh"><MdRefresh size={17} /></button>
        <Gap $width={19} />
        <button aria-label="More"><MdMoreVert size={17} /></button>
      </MailTools>
      <Tabs>
        <MailTab $active><MdInbox size={16} />Primary</MailTab>
        <MailTab>
          <MdOutlineSell size={16} />
          <TabText>
            <TabLine>Promotions <NewBadge>50 new</NewBadge></TabLine>
            <TabSenders>Sales NPP, Global Prime Direct, ...</TabSenders>
          </TabText>
        </MailTab>
        <MailTab><PeopleIcon />Social</MailTab>
      </Tabs>
      <Empty>
        <h1>Your Primary tab is empty.</h1>
        <p>Personal messages and messages that don’t appear in other tabs will be shown here.</p>
        <p>To add or remove tabs click <a href="#settings">inbox settings</a>.</p>
      </Empty>
      <Footer>
        <Storage>
          <StorageBar><StorageUsed style={{ width: `${(0.89 / 15) * 100}%` }} /></StorageBar>
          <StorageText href="#storage">0.89 GB of 15 GB used <MdOpenInNew size={15} /></StorageText>
        </Storage>
        <FooterLinks>
          <a href="#terms">Terms</a> · <a href="#privacy">Privacy</a> · <a href="#policies">Program Policies</a>
        </FooterLinks>
        <Activity>
          <div>Last account activity: 6 hours ago</div>
          <a href="#details">Details</a>
        </Activity>
      </Footer>
    </Main>
  );
}

function WindowsTaskbar() {
  return (
    <Taskbar>
      <StartButton aria-label="Start"><WindowsIcon /></StartButton>
      <TaskSearch>
        <TaskSearchIcon />
        <TaskSearchInput aria-label="Type here to search" placeholder="Type here to search" />
        <Birches />
      </TaskSearch>
      <TaskApps>
        <TaskApp aria-label="Edge"><EdgeIcon /></TaskApp>
        <TaskApp aria-label="Explorer" $running><FolderIcon /></TaskApp>
        <TaskApp aria-label="Store"><StoreIcon /></TaskApp>
        <TaskApp aria-label="Mail"><MailIcon /></TaskApp>
        <TaskApp aria-label="Zoom"><ZoomAppIcon /></TaskApp>
        <TaskApp aria-label="Chrome m" $running><ChromeMark badge="#7b1fa2" letter="m" /></TaskApp>
        <TaskApp aria-label="Chrome a" $active><ChromeMark badge="#78909c" letter="a" /></TaskApp>
      </TaskApps>
      <Tray>
        <DesktopLabel>Desktop</DesktopLabel>
        <Overflow aria-label="More toolbars">
          <svg width="9" height="7" fill="none" stroke="#fff" strokeWidth="1.500"><path d="m1 1 2.500 2.500L1 6M5 1l2.500 2.500L5 6" /></svg>
        </Overflow>
        <News><NewsIcon />Earnings upcoming</News>
        <TrayIcons>
          <TrayChevron />
          <SpeakerIcon />
          <NetworkIcon />
          <span>ENG</span>
        </TrayIcons>
        <Clock>7:49 am<br />09/11/2023</Clock>
        <NotificationIcon />
        <ShowDesktop aria-label="Show desktop" />
      </Tray>
    </Taskbar>
  );
}

function App() {
  return (
    <Screen>
      <GlobalStyle />
      <BrowserChrome />
      <MailHeader />
      <Body>
        <MailSidebar />
        <MailMain />
        <Rail>
          <CalendarIcon />
          <KeepIcon />
          <TasksIcon />
          <ContactsIcon />
          <RailRule />
          <MdAdd size={18} />
          <RailBottom aria-label="Hide side panel"><MdChevronRight size={18} /></RailBottom>
        </Rail>
      </Body>
      <WindowsTaskbar />
    </Screen>
  );
}

export default App;
